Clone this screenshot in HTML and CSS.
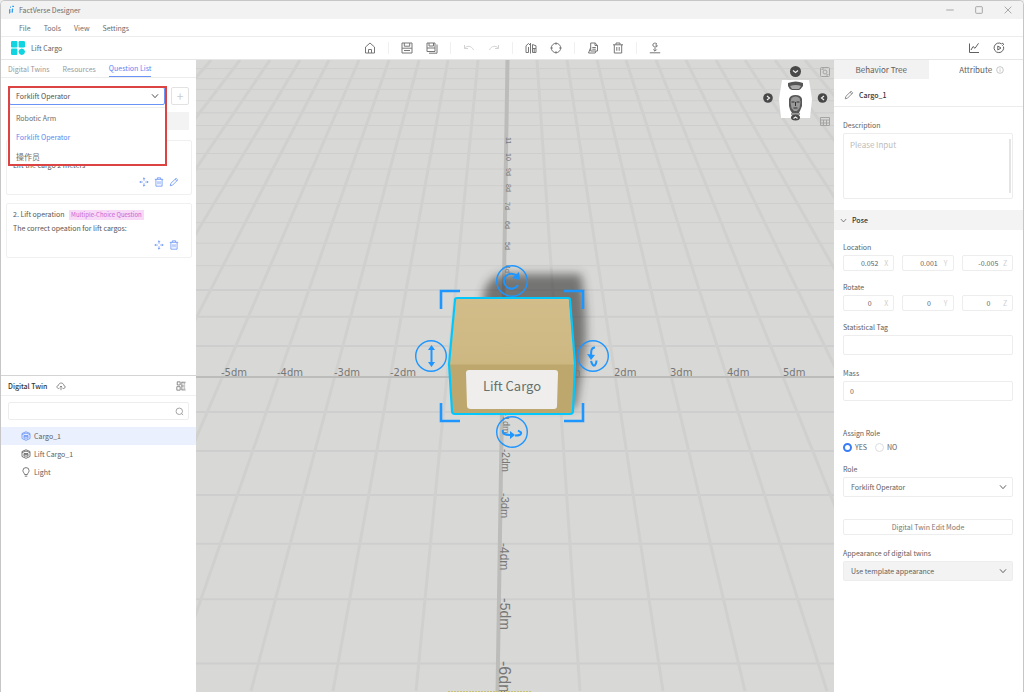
FILE: index.html
```html
<!DOCTYPE html>
<html lang="en">
<head>
<meta charset="utf-8">
<title>FactVerse Designer</title>
<link rel="stylesheet" href="styles.css">
</head>
<body>
<svg class="defs" width="0" height="0" aria-hidden="true">
  <symbol id="move" viewBox="0 0 12 12"><path d="M6 1v3.500M6 7.500V11M1 6h3.500M7.500 6H11M4.700 2.300 6 1l1.300 1.300M4.700 9.700 6 11l1.300-1.300M2.300 4.700 1 6l1.300 1.300M9.700 4.700 11 6 9.700 7.300"/></symbol>
  <symbol id="trash" viewBox="0 0 12 12"><path d="M1 2.800h10M4 2.600V1h4v1.600M2.300 2.800V11h7.400V2.800M4.800 5v3.800M7.200 5v3.800"/></symbol>
  <symbol id="pencil" viewBox="0 0 12 12"><path d="M1.500 10.500 2.200 7.700 8.500 1.500l2 2L4.200 9.800zM7.300 2.700l2 2"/></symbol>
  <symbol id="chevron" viewBox="0 0 12 12"><path d="M1.500 3.500 6 8.500l4.500-5"/></symbol>
  <symbol id="cube" viewBox="0 0 12 12"><path d="M6 .9 10.800 3v6L6 11.200 1.200 9V3zM1.200 4.200 6 2.500l4.800 1.700M3.600 5.500h4.800v3H3.600zM4.500 5.500V7L6 6l1.500 1V5.500"/></symbol>
</svg>
<div class="window">
  <header class="titlebar">
    <svg class="icon brand" viewBox="0 0 12 12"><path d="M4 10c2-2-1-3 1-5M5 2.500h1M7.500 1.500h2M7 9c2-2-1-3 1.500-4.500"/></svg>
    <span class="grow">FactVerse Designer</span>
    <div class="window-buttons">
      <button aria-label="Minimize"><svg class="icon" viewBox="0 0 12 12"><path d="M1.500 6h9"/></svg></button>
      <button aria-label="Maximize"><svg class="icon" viewBox="0 0 12 12"><rect x="2" y="2" width="8" height="8" rx="1"/></svg></button>
      <button aria-label="Close"><svg class="icon" viewBox="0 0 12 12"><path d="m2 2 8 8M10 2l-8 8"/></svg></button>
    </div>
  </header>
  <nav class="menubar"><button>File</button><button>Tools</button><button>View</button><button>Settings</button></nav>
  <div class="toolbar">
    <div class="project">
      <svg class="logo" viewBox="0 0 14 14"><rect width="6.400" height="6.400" rx="1.200"/><rect x="7.600" width="6.400" height="6.400" rx="1.200"/><rect y="7.600" width="6.400" height="6.400" rx="1.200"/><path d="m10.800 7.400 2.300 1 1 2.400-1 2.300-2.300 1-2.300-1-1-2.300 1-2.400z"/></svg>
      <span>Lift Cargo</span>
    </div>
    <div class="tools">
      <div class="group"><button aria-label="Home"><svg class="icon" viewBox="0 0 12 12"><path d="M1.500 5 6 1l4.500 4v6h-9zM4.500 11V7.500h3V11"/></svg></button></div>
      <div class="group">
        <button aria-label="Save"><svg class="icon" viewBox="0 0 12 12"><path d="M1 1h10v10H1zM3.300 1v3.200h5.400V1M1 6.200h10M3 8.500h6"/></svg></button>
        <button aria-label="Save as"><svg class="icon" viewBox="0 0 12 12"><path d="M1 1h8v8.500H1zM3 1v3h4.500V1M1 6h8M11 2.500V11.200H3"/></svg></button>
      </div>
      <div class="group faint">
        <button aria-label="Undo"><svg class="icon" viewBox="0 0 12 12"><path d="M1.500 3v3.500H5M1.500 6.300C4 3.300 8.500 3.500 10.500 8"/></svg></button>
        <button aria-label="Redo"><svg class="icon" viewBox="0 0 12 12"><path d="M10.500 3v3.500H7M10.500 6.300C8 3.300 3.500 3.500 1.500 8"/></svg></button>
      </div>
      <div class="group">
        <button aria-label="Align"><svg class="icon" viewBox="0 0 12 12"><path d="M1 3.800 3.500 1.500 5 3M1 3.800V10.500h2.500M3.500 5v5.500M5.500 1v10.500M7.500 2.500l3.500 1.300v6.700H7.500zM7.500 6.500H11M9.200 6.500v4"/></svg></button>
        <button aria-label="Focus"><svg class="icon" viewBox="0 0 12 12"><circle cx="6" cy="6" r="4.700"/><path d="M6 .4v2.400M6 9.200v2.400M.4 6h2.400M9.200 6h2.400"/></svg></button>
      </div>
      <div class="group">
        <button aria-label="Copy"><svg class="icon" viewBox="0 0 12 12"><path d="M3.700 1h4.500l2.300 2.300V9H3.700zM8 1v2.500h2.500M3.700 5.500 1.500 11h6.700l.8-2M5.300 5.500h3.500M5.300 7.200h3.500"/></svg></button>
        <button aria-label="Delete"><svg class="icon"><use href="#trash"/></svg></button>
      </div>
      <div class="group"><button aria-label="Drop to ground"><svg class="icon" viewBox="0 0 12 12"><path d="M8 2C6.500.5 3.800 1 3.800 3S6.500 5.300 8 4.500V3H6.300M6 5.500V9M4.300 7.500 6 9.200l1.700-1.700M.8 10.800h10.400"/></svg></button></div>
    </div>
    <div class="run">
      <button aria-label="Statistics"><svg class="icon" viewBox="0 0 12 12"><path d="M1.500 1.500v9h9.500M3 8l2-3.500 2 1.800 3.500-5"/></svg></button>
      <button aria-label="Play"><svg class="icon" viewBox="0 0 12 12"><path d="M10.500 4.500A4.800 4.800 0 1 1 8.800 2M9 1l1.800 1.200-1.500 1.500M4.800 4v4l3.200-2z"/></svg></button>
    </div>
  </div>
  <div class="body">
    <aside class="left">
      <section class="questions">
        <nav class="tabs"><button>Digital Twins</button><button>Resources</button><button class="active">Question List</button></nav>
        <div class="picker">
          <div class="combo">
            <select aria-label="Question role"><option>Forklift Operator</option></select>
            <svg class="icon arrow"><use href="#chevron"/></svg>
            <ul class="menu" role="listbox">
              <li role="option">Robotic Arm</li>
              <li role="option" aria-selected="true" class="chosen">Forklift Operator</li>
              <li role="option" lang="zh" class="han">操作员</li>
            </ul>
            <div class="marker"></div>
          </div>
          <button class="add" aria-label="Add">+</button>
        </div>
        <div class="strip"></div>
        <article class="card">
          <p>1. Lift operation</p>
          <p>Lift the cargo 2 meters</p>
          <div class="actions">
            <button aria-label="Move"><svg class="icon"><use href="#move"/></svg></button>
            <button aria-label="Delete"><svg class="icon"><use href="#trash"/></svg></button>
            <button aria-label="Edit"><svg class="icon"><use href="#pencil"/></svg></button>
          </div>
        </article>
        <article class="card">
          <p>2. Lift operation <span class="tag">Multiple-Choice Question</span></p>
          <p>The correct opeation for lift cargos:</p>
          <div class="actions">
            <button aria-label="Move"><svg class="icon"><use href="#move"/></svg></button>
            <button aria-label="Delete"><svg class="icon"><use href="#trash"/></svg></button>
          </div>
        </article>
      </section>
      <section class="twins">
        <h2>Digital Twin
          <svg class="icon" viewBox="0 0 12 12"><path d="M4 9H3C.5 8.500.5 5.500 3 5.200 3.500 1.500 9 1.500 9.300 5.200c2.200.3 2.200 3.500 0 3.800H8M6 11V6M4.500 7.500 6 6l1.500 1.500"/></svg>
          <svg class="icon end" viewBox="0 0 12 12"><path d="M1.500 1h3.500v3.800H1.500zM1 6.800h4V11H1zM7 1v10M7 1.500h4.500M7 6h4M7 10.700h4.500M9 3.500h2M9 8.500h2"/></svg>
        </h2>
        <div class="search"><input type="search" aria-label="Search"><svg class="icon" viewBox="0 0 12 12"><circle cx="5.700" cy="5.700" r="4.300"/><path d="m8.800 8.800 2 2"/></svg></div>
        <ul class="tree">
          <li class="current"><svg class="icon"><use href="#cube"/></svg>Cargo_1</li>
          <li><svg class="icon"><use href="#cube"/></svg>Lift Cargo_1</li>
          <li><svg class="icon" viewBox="0 0 12 12"><path d="M4.300 9C4.300 7.500 2.300 6.500 2.300 4.400a3.700 3.700 0 0 1 7.400 0C9.700 6.500 7.700 7.500 7.700 9zM4.500 11h3"/></svg>Light</li>
        </ul>
      </section>
    </aside>
    <main class="stage">
      <svg class="scene" viewBox="196 60 638 632" preserveAspectRatio="xMidYMid slice" role="img" aria-label="Cargo box in the scene">
        <defs>
          <filter id="soft" x="-30%" y="-30%" width="160%" height="160%"><feGaussianBlur stdDeviation="5"/></filter>
          <linearGradient id="top" x2="0" y2="1"><stop stop-color="#d2bd8a"/><stop offset="1" stop-color="#cdb781"/></linearGradient>
        </defs>
        <rect x="196" y="60" width="638" height="632" fill="#d8d8d6"/>
        <g transform="translate(196 60)">
          <path class="grid thin" d="M0 8.600H638M0 18.700H638M0 29.400H638M0 40.700H638M0 52.800H638M0 65.500H638M0 79H638M0 93.500H638M0 109H638M0 125.700H638M0 143.500H638M0 162.600H638M0 183.200H638M0 205.700H638"/>
          <path class="grid" d="M0 230H638M0 256.700H638M0 286H638M0 352H638M0 391H638M0 435H638M0 483.700H638M0 539.300H638M0 603.400H638"/>
          <path class="grid wide" d="M341 0 384 631M371 0 467 631M401 0 549 631M430 0 631 631M460 0 713 631M490 0 796 631M520 0 878 631M549 0 960 631M579 0 1043 631M609 0 1125 631M638 0 1207 631M282 0 220 631M252 0 137 631M223 0 55 631M193 0-27 631M163 0-109 631M133 0-192 631M104 0-274 631M74 0-356 631M44 0-439 631M15 0-521 631"/>
          <path d="M0 317H638" stroke="#bcbcba" stroke-width="2"/>
          <path d="M309.500 0h4L303.500 632h-4z" fill="#bcbcba"/>
        </g>
        <path d="M483 312V296q4-20 22-22h76q6 30 5 70l-10 64H480z" fill="#333" opacity=".6" filter="url(#soft)"/>
        <g class="axis">
          <text x="221" y="376">-5dm</text><text x="277" y="376">-4dm</text><text x="334" y="376">-3dm</text><text x="390" y="376">-2dm</text>
          <text x="558" y="376">1dm</text><text x="614" y="376">2dm</text><text x="670" y="376">3dm</text><text x="727" y="376">4dm</text><text x="783" y="376">5dm</text>
        </g>
        <g class="depth">
          <g font-size="7">
            <text transform="translate(506 137) rotate(90)">11</text><text transform="translate(506 153) rotate(90)">10</text><text transform="translate(506 168) rotate(90)">9d</text><text transform="translate(506 184) rotate(90)">8d</text>
            <text transform="translate(505 202) rotate(90)">7d</text><text transform="translate(505 221) rotate(90)">6d</text><text transform="translate(505 242) rotate(90)">5d</text><text transform="translate(505 265) rotate(90)">4d</text><text transform="translate(505 287) rotate(90)">3d</text>
          </g>
          <text font-size="9" transform="translate(503 413) rotate(90)">-1dm</text>
          <text font-size="10" transform="translate(502 449) rotate(90)">-2dm</text>
          <text font-size="11" transform="translate(501 493) rotate(90)">-3dm</text>
          <text font-size="12" transform="translate(500 543) rotate(90)">-4dm</text>
          <text font-size="14" transform="translate(500 598) rotate(90)">-5dm</text>
          <text font-size="16" transform="translate(499 661) rotate(90)">-6dm</text>
        </g>
        <path d="M456 299H569l6 66H449z" fill="url(#top)"/>
        <path d="M449 364.500H575l-3 49.500H452z" fill="#bea76c"/>
        <path d="M457 298H568q2 0 2 2l5 64-2 47q0 3-3 3H455q-3 0-3-3l-3-47 6-64q0-2 2-2z" fill="none" stroke="#00c8ff" stroke-width="2.200"/>
        <path d="M469 370h86q3 0 3 3l-1 33q0 3-3 3h-83q-4 0-4-3l-1-33q0-3 3-3z" fill="#efeeed"/>
        <text class="label" x="512" y="391" text-anchor="middle">Lift Cargo</text>
        <g fill="none" stroke="#1e96ff">
          <path stroke-width="2.600" d="M441 309v-18h19M564 291h19v18M441 403v18h19M564 421h19v-18"/>
          <g stroke-width="1.400"><circle cx="512" cy="281" r="15.300"/><circle cx="431" cy="356" r="15.300"/><circle cx="593" cy="356" r="15.300"/><circle cx="512" cy="432" r="15.300"/></g>
          <g stroke-width="2">
            <path d="M518 285a7.500 7.500 0 1 1-1-9"/><path d="M431.500 348v16"/>
            <path d="M595 347.500c-4 0-4 4-4 8.500M591 361q1 4 3.500 5M596.500 360.500q0 3-2 5.500"/><path d="M503 430c-1 4 2 5 8 5M515 435.500q7 0 6-3l-3-2"/>
          </g>
        </g>
        <g fill="#1e96ff"><path d="m519 272 1 8-8-2zM428 350l3.500-5 3.500 5zM428 362l3.500 5 3.500-5zM587 354l8 1-4 5zM510 431l5 4-5 4z"/></g>
        <g class="viewcube">
          <path d="M782 80h27l3 19-2 19h-29l-2-19z" fill="#fff"/>
          <path d="M788 83q8-3 15 0v3q-2 3-4 4h-7q-3-1-4-4z" fill="#555"/><path d="M790 86q6-2 11 0l-2 3h-7z" fill="#aaa"/>
          <path d="M789 99q1-4 6.500-4t6.500 4v7q-2 5-3 7h-7q-2-2-3-7z" fill="#585858"/><path d="M791.500 98q4-3 8 0l1 4-1 6-2.500 3h-3l-2.500-3-1-6z" fill="#999"/>
          <path d="M791.500 102h3M796.500 102h3M793.500 108h4M795.500 102v4M791 114h9" stroke="#333" fill="none"/>
          <g fill="#484848"><circle cx="795.500" cy="71.500" r="5.500"/><circle cx="768" cy="98" r="4.800"/><circle cx="822.500" cy="98" r="4.800"/><ellipse cx="795.500" cy="117.500" rx="4.500" ry="3"/></g>
          <path d="m793 70.500 2.500 2 2.500-2M767 96l2.500 2-2.500 2M824 96l-2.500 2 2.500 2M793.500 118.500l2-1.500 2 1.500" stroke="#eee" fill="none" stroke-width="1.200"/>
          <g fill="none" stroke="#a4a4a4"><rect x="820.500" y="67.500" width="9" height="9" rx="1"/><circle cx="825" cy="72" r="2"/><path d="M822 70v-1h2M828 74v1h-2M820.500 117.500h9v8h-9zM820.500 120h9M820.500 123h9M823.500 120v5M826.500 120v5"/></g>
        </g>
        <path d="M448 691.500h84" stroke="#c9c37a" stroke-dasharray="2 1"/>
      </svg>
    </main>
    <aside class="right">
      <nav class="rtabs"><button class="resting">Behavior Tree</button><button class="open">Attribute <svg class="icon" viewBox="0 0 12 12"><circle cx="6" cy="6" r="5"/><path d="M6 5v3.500M6 3v1"/></svg></button></nav>
      <div class="object"><svg class="icon"><use href="#pencil"/></svg><strong>Cargo_1</strong></div>
      <div class="block">
        <label for="description">Description</label>
        <div class="area"><textarea id="description" placeholder="Please Input"></textarea><i class="thumb"></i></div>
      </div>
      <h2 class="section"><svg class="icon"><use href="#chevron"/></svg>Pose</h2>
      <form class="block form">
        <fieldset><legend>Location</legend><div class="triple">
          <label><input value="0.052"><span>X</span></label><label><input value="0.001"><span>Y</span></label><label><input value="-0.005"><span>Z</span></label>
        </div></fieldset>
        <fieldset><legend>Rotate</legend><div class="triple">
          <label><input value="0"><span>X</span></label><label><input value="0"><span>Y</span></label><label><input value="0"><span>Z</span></label>
        </div></fieldset>
        <div class="field"><label for="stat">Statistical Tag</label><input id="stat"></div>
        <div class="field mass"><label for="mass">Mass</label><input id="mass" value="0"></div>
        <fieldset><legend>Assign Role</legend><div class="radios">
          <label><input type="radio" name="assign" checked>YES</label><label><input type="radio" name="assign">NO</label>
        </div></fieldset>
        <div class="field role"><label for="role">Role</label><div class="combo"><select id="role"><option>Forklift Operator</option></select><svg class="icon arrow"><use href="#chevron"/></svg></div></div>
        <button type="button" class="edit">Digital Twin Edit Mode</button>
        <div class="field"><label for="look">Appearance of digital twins</label><div class="combo filled"><select id="look"><option>Use template appearance</option></select><svg class="icon arrow"><use href="#chevron"/></svg></div></div>
      </form>
    </aside>
  </div>
</div>
</body>
</html>
```
FILE: styles.css
```css
* { box-sizing: border-box; }
body, h2, p, ul, fieldset, legend { margin: 0; padding: 0; border: 0; }
body { background: #ececec; color: #606060; font: 7px/12px "Noto Sans CJK SC", sans-serif; }
button, input, select, textarea { margin: 0; padding: 0; border: 0; background: none; color: inherit; font: inherit; }
ul { list-style: none; }
.defs { position: absolute; }
.icon { width: 12px; height: 12px; fill: none; stroke: currentColor; stroke-width: 1; flex: none; display: block; }
.grow { flex: 1; }

.window { height: 100vh; display: flex; flex-direction: column; background: #fff; border: 1px solid #c6c6c6; border-bottom: 0; border-radius: 5px 5px 0 0; overflow: hidden; }
.titlebar { height: 18px; flex: none; display: flex; align-items: center; padding-left: 4px; background: #f2f2f2; color: #6c6c6c; }
.titlebar .icon { width: 10px; height: 10px; }
.titlebar .brand { width: 12px; margin-right: 2px; color: #2596e8; stroke-width: 1.500; }
.window-buttons { display: flex; gap: 18px; padding-right: 9px; color: #999; }
.window-buttons button { width: 11px; }
.menubar { height: 18px; flex: none; display: flex; align-items: center; gap: 13px; padding-left: 18px; border-bottom: 1px solid #ececec; color: #6c6c6c; }
.toolbar { height: 23px; flex: none; display: grid; grid-template-columns: 1fr auto 1fr; align-items: center; border-bottom: 1px solid #e6e6e6; }
.project { display: flex; align-items: center; gap: 6px; padding-left: 10px; }
.logo { width: 14px; height: 14px; fill: #10d4e0; }
.tools { display: flex; align-items: center; color: #777; }
.group { display: flex; gap: 13px; padding: 0 12px; border-right: 1px solid #f0f0f0; }
.group:last-child { border-right: 0; }
.group.faint { color: #d2d2d2; }
.run { display: flex; justify-content: flex-end; gap: 13px; padding-right: 18px; }

.body { flex: 1; min-height: 0; display: flex; }
.left { width: 195px; flex: none; display: flex; flex-direction: column; }
.questions { height: 316px; flex: none; border-bottom: 1px solid #d4d4d4; }
.tabs { height: 18px; display: flex; align-items: stretch; gap: 13px; padding: 0 7px; border-bottom: 1px solid #ececec; color: #999; }
.tabs .active { color: #5a88f2; border-bottom: 1px solid #6a94f5; }
.picker { display: flex; gap: 6px; padding: 9px 7px 7px 8px; }
.combo { position: relative; flex: 1; height: 18px; display: flex; align-items: center; border: 1px solid #ededed; border-radius: 2px; background: #fff; }
.combo select { appearance: none; width: 100%; height: 100%; padding-left: 7px; }
.combo .arrow { position: absolute; right: 5px; width: 8px; height: 8px; stroke-width: 1.500; pointer-events: none; }
.picker .combo { border-color: #6a94f5; color: #505050; }
.picker .combo select { padding-left: 6px; }
.menu { position: absolute; top: 19px; left: -1px; right: -1px; z-index: 1; padding: 1px 7px 0; background: #fff; color: #6c6c6c; border-top: 1px solid #eee; height: 58px; }
.menu li { height: 19px; line-height: 19px; }
.menu .han { font-size: 8px; }
.menu .chosen { color: #5a88f2; }
.marker { position: absolute; inset: -2px -3px -62px -2px; z-index: 2; border: 2px solid #dc4444; pointer-events: none; }
.add { width: 18px; height: 18px; border: 1px solid #e2e2e2; border-radius: 2px; color: #ccc; font-size: 12px; }
.strip { height: 18px; margin: 0 7px 10px 8px; background: #f3f3f3; }
.card { margin: 0 4px 8px 5px; padding: 3px 12px 7px 6px; border: 1px solid #f0f0f0; border-radius: 2px; color: #555; }
.card p { line-height: 14px; }
.tag { display: inline-block; padding: 0 2px; margin-left: 3px; font-size: 6px; line-height: 10px; background: #f8daf8; color: #c864d0; }
.actions { display: flex; justify-content: flex-end; gap: 5px; padding-top: 5px; color: #6a94f5; }
.actions .icon { width: 10px; height: 10px; }
.twins h2 { height: 20px; display: flex; align-items: center; gap: 9px; padding: 0 10px 0 7px; border-bottom: 1px solid #f0f0f0; color: #333; font-size: 7px; font-weight: 500; }
.twins h2 .icon { width: 10px; height: 10px; color: #777; }
.twins h2 .end { margin-left: auto; }
.search { height: 18px; margin: 6px 7px 7px; display: flex; align-items: center; border: 1px solid #ededed; border-radius: 2px; padding-right: 4px; color: #888; }
.search input { flex: 1; min-width: 0; outline: 0; }
.search .icon { width: 9px; height: 9px; }
.tree li { height: 18px; display: flex; align-items: center; gap: 3px; padding-left: 20px; }
.tree .icon { width: 10px; height: 10px; }
.tree .current { background: #eaf0fe; }
.tree .current .icon { color: #6a94f5; }

.stage { flex: 1; min-width: 0; background: #d8d8d6; }
.scene { display: block; width: 100%; height: 100%; }
.grid { fill: none; stroke: #cecece; stroke-width: 2; }
.grid.thin { stroke-width: 1; }
.grid.wide { stroke-width: 3; stroke: #d0d0ce; }
.axis { font: 10px "DejaVu Sans", sans-serif; fill: #777; }
.depth { font-family: "Liberation Sans", sans-serif; fill: #777; }
.label { font: 13px "Noto Sans CJK SC", sans-serif; fill: #65716a; }

.right { width: 189px; flex: none; }
.rtabs { height: 19px; display: grid; grid-template-columns: 1fr 1fr; font-size: 8px; }
.rtabs button { display: flex; align-items: center; justify-content: center; gap: 4px; }
.rtabs .open { padding-left: 12px; }
.rtabs .resting { background: #f2f2f2; }
.rtabs .icon { width: 8px; height: 8px; color: #aaa; }
.object { height: 28px; display: flex; align-items: center; gap: 5px; padding: 4px 10px 0; border-bottom: 1px solid #ececec; color: #333; }
.object strong { font-weight: 500; }
.object .icon { width: 10px; height: 10px; color: #777; }
.block { padding: 12px 10px 11px 9px; }
.block label, legend { display: block; }
.area { position: relative; display: flex; margin-top: 2px; }
.area textarea { width: 100%; height: 66px; resize: none; padding: 5px 6px; border: 1px solid #ededed; border-radius: 2px; font-size: 8px; line-height: 12px; }
.area ::placeholder { color: #bbb; }
.thumb { position: absolute; right: 2px; top: 6px; bottom: 6px; width: 2px; background: #e4e4e4; }
.section { height: 20px; display: flex; align-items: center; gap: 5px; padding-left: 6px; background: #f3f3f3; color: #333; font-size: 7px; font-weight: 500; }
.section .icon { width: 7px; height: 7px; }
.form { display: flex; flex-direction: column; gap: 10px; padding-top: 11px; }
.triple { display: grid; grid-template-columns: repeat(3, 1fr); gap: 8px; margin-top: 2px; }
.triple label { height: 16px; display: flex; align-items: center; border: 1px solid #ededed; border-radius: 2px; }
.triple input { width: 0; flex: 1; padding-left: 14px; text-align: center; }
.triple span { width: 12px; padding-left: 3px; color: #d0d0d0; }
.field input, .field .combo { width: 100%; height: 20px; margin-top: 2px; border: 1px solid #ededed; border-radius: 2px; }
.field > input { padding-left: 6px; }
.mass { margin: 2px 0 16px; }
.radios { display: flex; gap: 8px; margin-top: 2px; }
.radios label { display: flex; align-items: center; gap: 3px; }
.radios input { appearance: none; width: 9px; height: 9px; border: 1px solid #ddd; border-radius: 50%; }
.radios input:checked { border: 2px solid #3b7cf5; }
.edit { height: 16px; margin: 12px 0 2px; border: 1px solid #ededed; border-radius: 2px; color: #777; }
.field .filled { background: #f3f3f3; }
```
